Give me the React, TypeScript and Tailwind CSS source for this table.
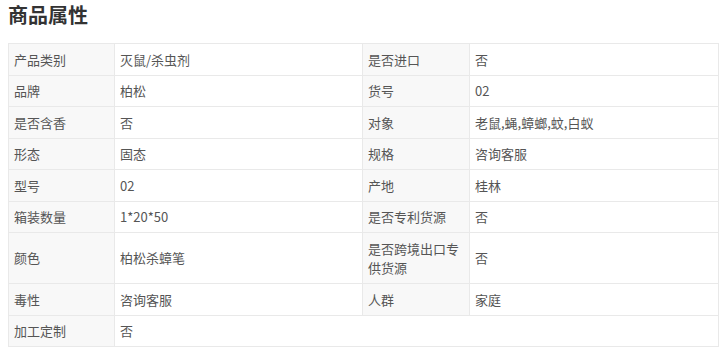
import React from 'react';

interface AttrRow {
  label: string;
  value: string;
  label2?: string;
  value2?: string;
}

const ROWS: AttrRow[] = [
  { label: '产品类别', value: '灭鼠/杀虫剂', label2: '是否进口', value2: '否' },
  { label: '品牌', value: '柏松', label2: '货号', value2: '02' },
  { label: '是否含香', value: '否', label2: '对象', value2: '老鼠,蝇,蟑螂,蚊,白蚁' },
  { label: '形态', value: '固态', label2: '规格', value2: '咨询客服' },
  { label: '型号', value: '02', label2: '产地', value2: '桂林' },
  { label: '箱装数量', value: '1*20*50', label2: '是否专利货源', value2: '否' },
  { label: '颜色', value: '柏松杀蟑笔', label2: '是否跨境出口专供货源', value2: '否' },
  { label: '毒性', value: '咨询客服', label2: '人群', value2: '家庭' },
  { label: '加工定制', value: '否' },
];

const labelCls = 'bg-[#f8f8f8] border border-[#e9e9e9] px-[5px] py-[5.5px] align-middle';
const valueCls = 'border border-[#e9e9e9] px-[5px] py-[5.5px] align-middle';

export default function App() {
  return (
    <div
      className="bg-white px-2 text-[#555]"
      style={{ fontFamily: '"Noto Sans CJK SC", "Noto Sans", sans-serif' }}
    >
      <h2 className="text-[20px] font-bold leading-[30px] text-[#333]">商品属性</h2>
      <table className="mt-[13px] w-[710px] table-fixed border-collapse text-[13px] leading-[19.5px]">
        <colgroup>
          <col className="w-[106px]" />
          <col className="w-[248px]" />
          <col className="w-[107px]" />
          <col className="w-[249px]" />
        </colgroup>
        <tbody>
          {ROWS.map((row) => (
            <tr key={row.label}>
              <td className={labelCls}>{row.label}</td>
              {row.label2 ? (
                <>
                  <td className={valueCls}>{row.value}</td>
                  <td className={labelCls}>{row.label2}</td>
                  <td className={valueCls}>{row.value2}</td>
                </>
              ) : (
                <td className={valueCls} colSpan={3}>{row.value}</td>
              )}
            </tr>
          ))}
        </tbody>
      </table>
    </div>
  );
}
